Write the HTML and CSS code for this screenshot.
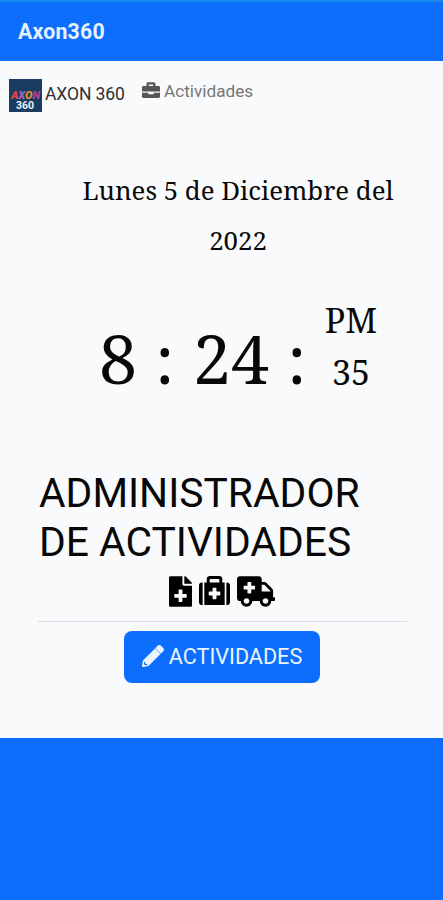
FILE: index.html
```html
<!DOCTYPE html>
<html lang="es">
<head>
<meta charset="utf-8">
<title>Axon360</title>
<link rel="stylesheet" href="styles.css">
</head>
<body>
<header class="appbar">Axon360</header>
<main class="page">
  <nav class="nav">
    <svg class="logo" viewBox="0 0 33 33">
      <rect width="33" height="33" fill="#193d61"/>
      <text class="logo-word" x="2" y="20" textLength="29" lengthAdjust="spacingAndGlyphs"><tspan fill="#e5433c">A</tspan><tspan fill="#a565b5">X</tspan><tspan fill="#e58b35">O</tspan><tspan fill="#a94496">N</tspan></text>
      <text class="logo-num" x="7" y="30" textLength="18">360</text>
    </svg>
    <span class="brand">AXON 360</span>
    <a class="nav-link">
      <svg class="case" viewBox="0 0 512 512"><path fill="currentColor" fill-rule="evenodd" d="M40 144h88V80c0-27 21-48 48-48h160c27 0 48 21 48 48v64h88c22 0 40 18 40 40v112H0V184c0-22 18-40 40-40zm152 0h128V96H192v48zM0 332h180v44h152v-44h180v108c0 22-18 40-40 40H40c-22 0-40-18-40-40V332z"/></svg>
      <span>Actividades</span>
    </a>
  </nav>
  <section class="clock">
    <p class="date">Lunes 5 de Diciembre del<br>2022</p>
    <div class="time">
      <span class="hour">8</span><span class="sep">:</span><span class="minutes">24</span><span class="sep">:</span>
      <div class="side"><span>PM</span><span>35</span></div>
    </div>
  </section>
  <section class="admin">
    <h1>ADMINISTRADOR<br>DE ACTIVIDADES</h1>
    <div class="icons">
      <svg width="23" height="31" viewBox="0 0 384 512"><path fill-rule="evenodd" d="M224 136V0H24C11 0 0 11 0 24v464c0 13 11 24 24 24h336c13 0 24-11 24-24V160H248c-13 0-24-11-24-24zm64 160c4 0 8 4 8 8v48c0 4-4 8-8 8h-64v64c0 4-4 8-8 8h-48c-4 0-8-4-8-8v-64H96c-4 0-8-4-8-8v-48c0-4 4-8 8-8h64v-64c0-4 4-8 8-8h48c4 0 8 4 8 8v64h64zm96-174v6H256V0h6c6 0 12 3 17 7l98 98c4 5 7 11 7 17z"/></svg>
      <svg width="31" height="31" viewBox="0 0 512 512"><path fill-rule="evenodd" d="M88 480h336V108h-40V48c0-27-21-48-48-48H176c-27 0-48 21-48 48v60H88v372zm88-416c0-9 7-16 16-16h128c9 0 16 7 16 16v44H176V64zm336 92v276c0 27-21 48-48 48h-12V108h12c27 0 48 21 48 48zM60 480H48c-27 0-48-21-48-48V156c0-27 21-48 48-48h12v372zm292-208v32c0 9-7 16-16 16h-48v48c0 9-7 16-16 16h-32c-9 0-16-7-16-16v-48h-48c-9 0-16-7-16-16v-32c0-9 7-16 16-16h48v-48c0-9 7-16 16-16h32c9 0 16 7 16 16v48h48c9 0 16 7 16 16z"/></svg>
      <svg width="38" height="31" viewBox="0 0 640 512"><path fill-rule="evenodd" d="M624 352h-16V244c0-13-5-25-14-34L494 110c-9-9-21-14-34-14h-44V48c0-26-22-48-48-48H48C22 0 0 22 0 48v320c0 27 22 48 48 48h16c0 53 43 96 96 96s96-43 96-96h128c0 53 43 96 96 96s96-43 96-96h48c9 0 16-7 16-16v-32c0-9-7-16-16-16zM160 464c-27 0-48-22-48-48s21-48 48-48 48 22 48 48-22 48-48 48zm144-248c0 4-4 8-8 8h-56v56c0 4-4 8-8 8h-48c-4 0-8-4-8-8v-56h-56c-4 0-8-4-8-8v-48c0-4 4-8 8-8h56v-56c0-4 4-8 8-8h48c4 0 8 4 8 8v56h56c4 0 8 4 8 8v48zm176 248c-27 0-48-22-48-48s21-48 48-48 48 22 48 48-22 48-48 48zm80-208H416V144h44l100 100v12z"/></svg>
    </div>
    <hr>
    <button class="button">
      <svg width="22" height="22" viewBox="0 0 512 512"><path fill="currentColor" fill-rule="evenodd" d="M498 142l-50 50c-5 5-12 5-17 0L320 81c-5-5-5-12 0-17l50-50c19-19 49-19 68 0l60 60c19 19 19 49 0 68zM296 88L22 362 0 484c-3 16 12 30 28 28l122-22 274-274c5-5 5-12 0-17L313 88c-4-5-12-5-17 0zM78 434l48 16v14l-50 8-32-31 8-50h14l12 43z"/></svg>
      <span>ACTIVIDADES</span>
    </button>
  </section>
</main>
</body>
</html>
```
FILE: styles.css
```css
* { box-sizing: border-box; }
body { margin: 0; min-height: 900px; background: #0d6efd; font-family: Roboto, sans-serif; color: #080808; }
.appbar { height: 61px; padding: 3px 18px 0; border-top: 2px solid #1487e8; color: #e4f1ff; font-size: 21.3px; font-weight: 700; line-height: 54px; letter-spacing: .2px; }
.page { height: 677px; background: #f9fafc; }
.nav { display: flex; height: 107px; padding: 18px 0 0 9px; }
.logo { width: 33px; height: 33px; }
.logo-word { font: italic 900 10px Roboto, sans-serif; }
.logo-num { fill: #e8f2fb; font: 700 10.5px Roboto, sans-serif; }
.brand { margin-left: 3px; width: 80px; font-size: 17.5px; letter-spacing: -.1px; line-height: 30px; color: #303030; white-space: nowrap; }
.nav-link { display: flex; margin-left: 17px; gap: 4px; font-size: 17.2px; line-height: 25px; color: #777; }
.case { width: 18px; height: 18px; margin-top: 2px; color: #555; }
.clock { height: 302px; margin-top: -3px; font-family: "Noto Serif", "DejaVu Serif Condensed", "DejaVu Serif", serif; }
.date { margin: 0; padding-left: 33px; height: 130px; text-align: center; font-size: 25.8px; line-height: 50px; }
.time { display: flex; padding-left: 99px; height: 110px; }
.hour, .minutes, .sep { font-size: 68px; line-height: 125px; }
.hour { width: 56px; }
.sep { width: 38px; }
.minutes { width: 94px; }
.side { display: flex; flex-direction: column; width: 54px; margin-left: -1px; align-items: center; font-size: 34px; line-height: 52px; margin-top: -1px; }
.admin { padding: 2px 36px 0 38px; }
h1 { margin: 0 0 0 1px; font-size: 40.8px; font-weight: 400; line-height: 49px; white-space: nowrap; }
.icons { display: flex; justify-content: center; gap: 7px; height: 39px; margin-top: 9px; padding-right: 1px; }
hr { margin: 6px 0 9px; border: 0; border-top: 1px solid #dcdde1; }
.button { display: flex; align-items: center; justify-content: center; gap: 5px; width: 196px; height: 52px; margin: 0 auto 0 86px; padding: 0 0 2px; border: 0; border-radius: 8px; background: #0d6efd; color: #eaf4ff; font: 21.6px Roboto, sans-serif; }
```
